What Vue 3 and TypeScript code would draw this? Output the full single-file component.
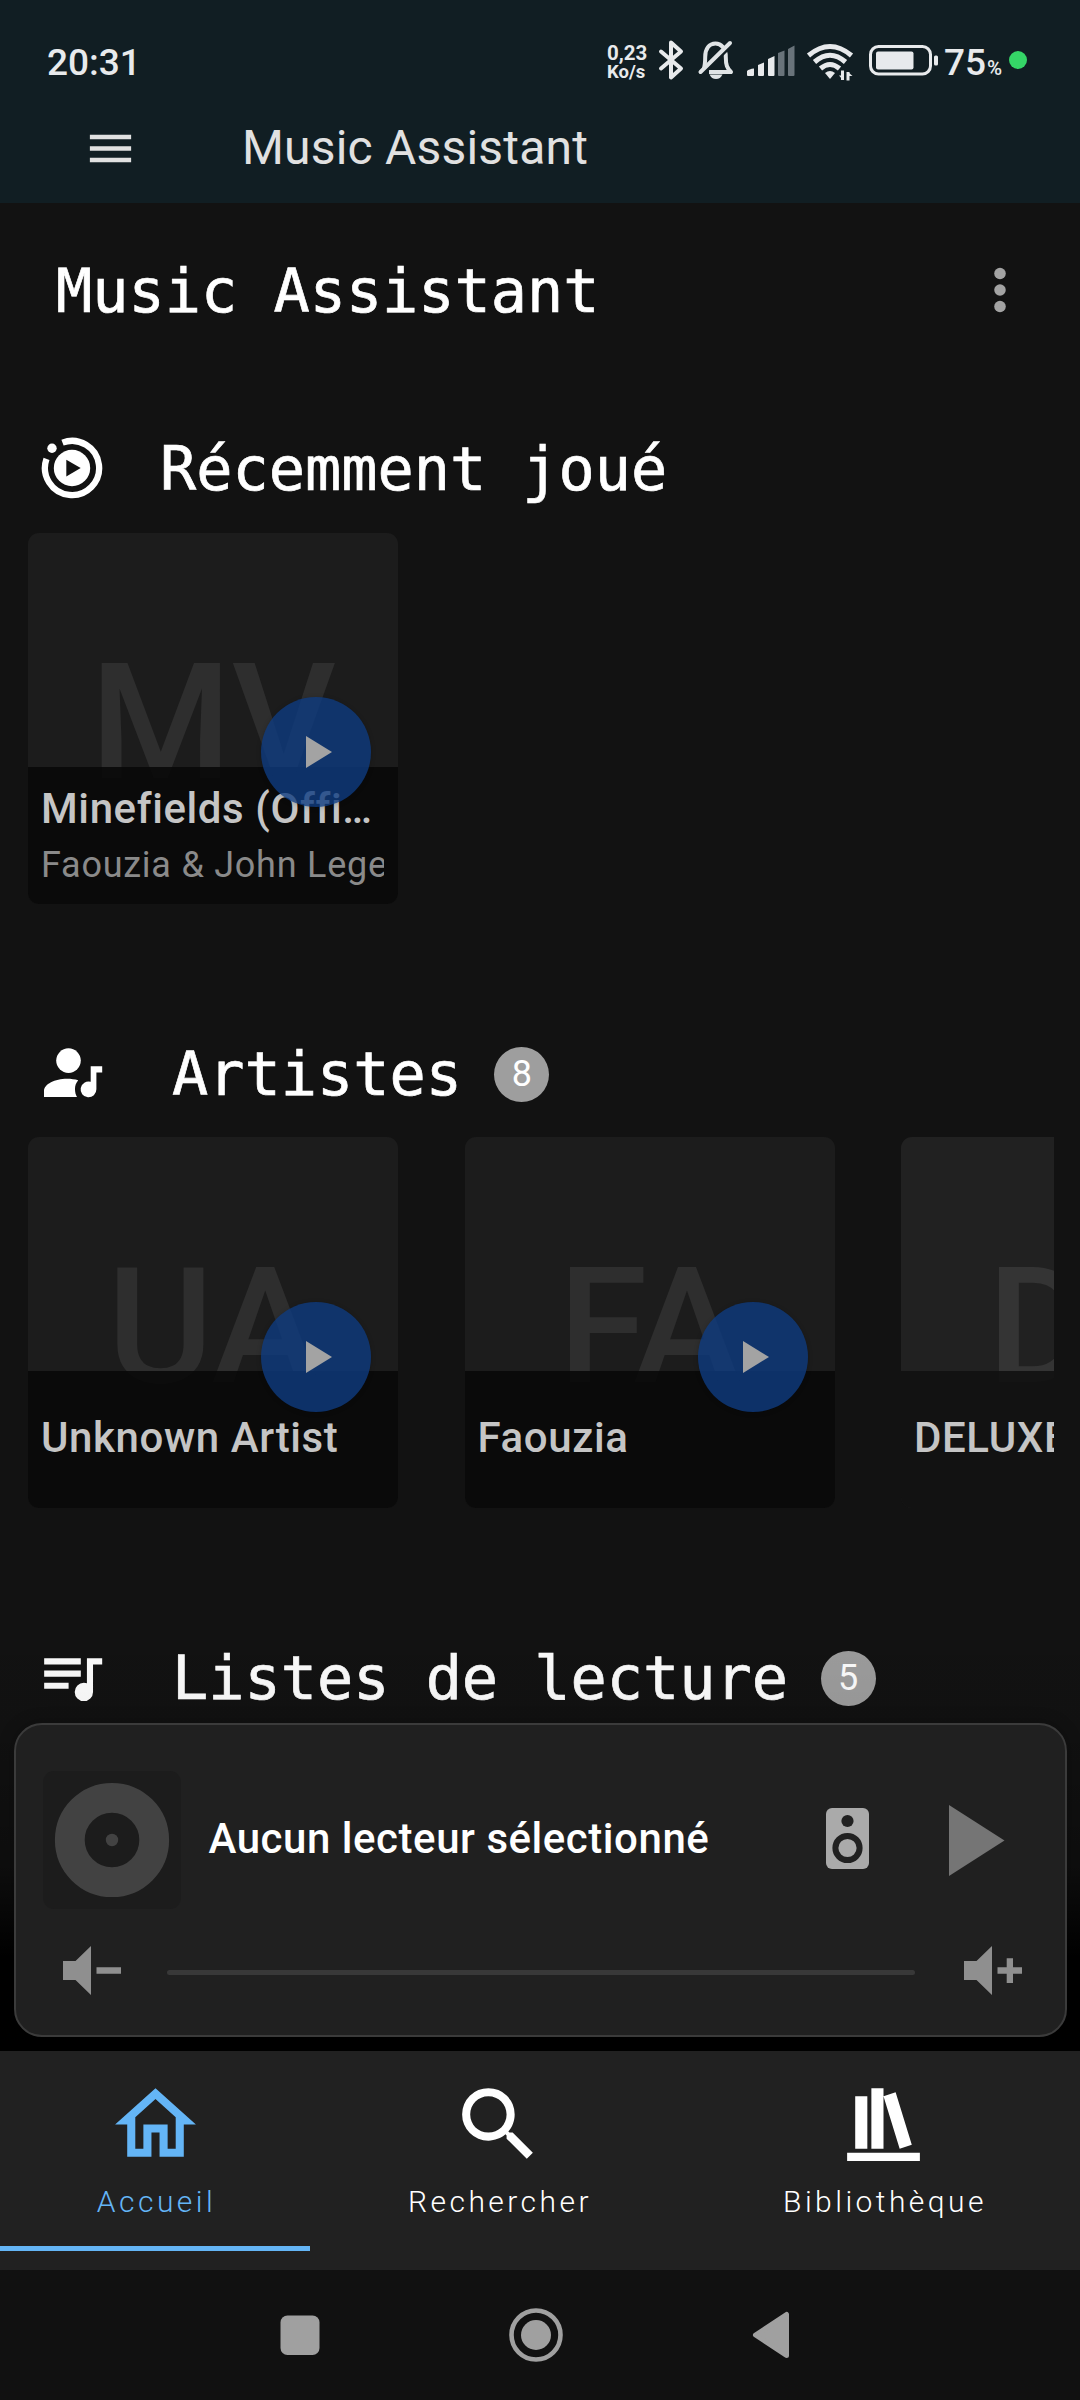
<script setup lang="ts">
interface Card {
  initials: string
  title: string
  subtitle?: string
  playable: boolean
}

interface Section {
  icon: 'recent' | 'artist' | 'playlist'
  title: string
  count?: number
  cards: Card[]
}

interface Tab {
  label: string
  path: string
  width: number
  active: boolean
}

const sections: Section[] = [
  {
    icon: 'recent',
    title: 'Récemment joué',
    cards: [{ initials: 'MV', title: 'Minefields (Official Video)', subtitle: 'Faouzia & John Legend', playable: true }],
  },
  {
    icon: 'artist',
    title: 'Artistes',
    count: 8,
    cards: [
      { initials: 'UA', title: 'Unknown Artist', playable: true },
      { initials: 'FA', title: 'Faouzia', playable: true },
      { initials: 'DE', title: 'DELUXE', playable: false },
    ],
  },
  { icon: 'playlist', title: 'Listes de lecture', count: 5, cards: [] },
]

const tabs: Tab[] = [
  {
    label: 'Accueil',
    width: 310,
    active: true,
    path: 'M12 5.69L17 10.19V18H15V12H9V18H7V10.19L12 5.69M12 3L2 12H5V20H11V14H13V20H19V12H22',
  },
  {
    label: 'Rechercher',
    width: 377,
    active: false,
    path: 'M9.5,3A6.5,6.5 0 0,1 16,9.5C16,11.11 15.41,12.59 14.44,13.73L14.71,14H15.5L20.5,19L19,20.5L14,15.5V14.71L13.73,14.44C12.59,15.41 11.11,16 9.5,16A6.5,6.5 0 0,1 3,9.5A6.5,6.5 0 0,1 9.5,3M9.5,5C7,5 5,7 5,9.5C5,12 7,14 9.5,14C12,14 14,12 14,9.5C14,7 12,5 9.5,5Z',
  },
  {
    label: 'Bibliothèque',
    width: 393,
    active: false,
    path: 'M9 3V18H12V3H9M12 5L16 18L19 17L15 4L12 5M5 5V18H8V5H5M3 19V21H21V19H3Z',
  },
]
</script>

<template>
  <div class="screen">
    <header class="top">
      <div class="status">
        <span class="clock">20:31</span>
        <div class="indicators">
          <div class="speed"><span class="rate">0,23</span><span class="unit">Ko/s</span></div>
          <svg class="bt" width="26" height="42" viewBox="0 0 26 42" fill="none" stroke="#e8eaec" stroke-width="4" stroke-linejoin="round" stroke-linecap="round">
            <path d="M3 12.5L23 29.5L13 38.5V3.5L23 12.5L3 29.5" />
          </svg>
          <svg class="bell" width="38" height="42" viewBox="0 0 38 42">
            <path d="M6.5 30.5C8 27 8.200 24 8.200 18C8.200 10 12 4.500 18.500 4.500C24 4.500 28.800 9 28.800 18C28.800 26 30 29 34 33H12" fill="none" stroke="#e0e4e6" stroke-width="4" stroke-linejoin="round" />
            <path d="M12.500 35.500H25.500C24 38.500 22 40 19 40C16 40 14 38.500 12.500 35.500Z" fill="#e0e4e6" />
            <path d="M5.500 35L35.500 4.500" stroke="#111e23" stroke-width="4" />
            <path d="M3.500 33L33 4" stroke="#e0e4e6" stroke-width="4" stroke-linecap="round" />
          </svg>
          <svg class="signal" width="50" height="32" viewBox="0 0 50 32">
            <path fill="#e8eaec" d="M1 26Q3 24 8 23.500V30Q8 31 7 31H2Q1 31 1 30ZM12 20L18 17.500V30Q18 31 17 31H13Q12 31 12 30ZM22 14L28.500 11V30Q28.500 31 27.500 31H23Q22 31 22 30Z" />
            <path fill="#69737a" d="M32 8L38.500 5.500V30Q38.500 31 37.500 31H33Q32 31 32 30ZM42 4L48.500 .500V30Q48.500 31 47.500 31H43Q42 31 42 30Z" />
          </svg>
          <svg class="wifi" width="50" height="38" viewBox="0 0 50 38" fill="none" stroke="#e8eaec" stroke-width="5">
            <path d="M2.500 12.500Q24 -5.500 45.500 12.500M8.500 19Q24 5.500 39.500 19M14.500 25.500Q24 17.500 33.500 25.500" />
            <path fill="#e8eaec" stroke="none" d="M19 30Q24 26 29 30L24 36Z" />
            <path stroke-width="3" d="M36.500 27.500V37M42 29V37.500" />
            <path fill="#e8eaec" stroke="none" d="M33 32.500H36.500V36.500ZM42 29L46.500 33H42Z" />
          </svg>
          <svg class="battery" width="70" height="31" viewBox="0 0 70 31">
            <rect x="1.500" y="1.500" width="60" height="27.500" rx="8" fill="none" stroke="#e8eaec" stroke-width="3" />
            <rect x="7" y="6.500" width="37.500" height="18" rx="2" fill="#e8eaec" />
            <rect x="65" y="10.500" width="4" height="10" rx="1.500" fill="#e8eaec" />
          </svg>
          <span class="level">75<small>%</small></span>
          <i class="mic"></i>
        </div>
      </div>
      <div class="appbar">
        <svg width="55" height="55" viewBox="0 0 24 24" fill="#e1e1e1"><path d="M3,6H21V8H3V6M3,11H21V13H3V11M3,16H21V18H3V16Z" /></svg>
        <span class="app-name">Music Assistant</span>
      </div>
    </header>

    <main class="content">
      <div class="page-head">
        <h1>Music Assistant</h1>
        <svg class="more" width="66" height="66" viewBox="0 0 24 24" fill="#a3a3a3">
          <circle cx="12" cy="6" r="2.100" /><circle cx="12" cy="12" r="2.100" /><circle cx="12" cy="18" r="2.100" />
        </svg>
      </div>

      <section v-for="s in sections" :key="s.icon" class="section" :class="s.icon">
        <div class="section-head">
          <svg v-if="s.icon === 'recent'" class="sec-icon" width="66" height="66" viewBox="-33 -33 66 66">
            <path d="M-9.500 -25.400A27.100 27.100 0 1 1 -25.500 -9.100" fill="none" stroke="#fff" stroke-width="6.300" />
            <circle cx="-20" cy="-19.700" r="4.700" fill="#fff" />
            <circle r="18.200" fill="#fff" />
            <path d="M-5.700 -8.200V8.400L8.700 0Z" fill="#121212" />
          </svg>
          <svg v-else-if="s.icon === 'artist'" class="sec-icon" width="73.300" height="73.300" viewBox="35 1036 73.300 73.300" fill="#fff">
            <circle cx="68.500" cy="1060.600" r="12.300" />
            <path d="M44 1097V1091C44 1084 55 1078.700 67 1078.700C71 1078.700 75 1079.200 78.200 1080.200C75.800 1083 75 1086 75 1089C75 1092 75.700 1095 77 1097Z" />
            <path d="M90.700 1066.300H102.200V1072.600H96.400V1089.300A7.900 7.900 0 1 1 90.700 1081.800Z" />
          </svg>
          <svg v-else class="sec-icon" width="73.300" height="73.300" viewBox="0 0 24 24" fill="#fff">
            <path d="M15,6H3V8H15V6M15,10H3V12H15V10M3,16H11V14H3V16M17,6V14.180C16.690,14.070 16.350,14 16,14A3,3 0 0,0 13,17A3,3 0 0,0 16,20A3,3 0 0,0 19,17V8H22V6H17Z" />
          </svg>
          <h2>{{ s.title }}</h2>
          <span v-if="s.count" class="badge">{{ s.count }}</span>
        </div>
        <div v-if="s.cards.length" class="cards">
          <article v-for="c in s.cards" :key="c.initials" class="card" :class="{ plain: !c.playable }">
            <div class="initials">{{ c.initials }}</div>
            <div class="caption" :class="{ single: !c.subtitle }">
              <div class="title">{{ c.title }}</div>
              <div v-if="c.subtitle" class="subtitle">{{ c.subtitle }}</div>
            </div>
            <div v-if="c.playable" class="play">
              <svg width="26" height="32" viewBox="0 0 26 32"><path d="M0 0V32L26 16Z" fill="#a3a3a3" /></svg>
            </div>
          </article>
        </div>
      </section>

      <div class="player-dock">
        <div class="player">
          <div class="now">
            <svg class="disc" width="138" height="138" viewBox="-69 -69 138 138">
              <rect x="-69" y="-69" width="138" height="138" rx="11" fill="#1c1c1c" />
              <circle r="42.200" fill="none" stroke="#424242" stroke-width="29.800" />
              <circle r="6.200" fill="#424242" />
            </svg>
            <span class="now-title">Aucun lecteur sélectionné</span>
            <svg class="speaker" width="43" height="61" viewBox="0 0 43 61">
              <rect width="43" height="61" rx="6" fill="#aaa" />
              <circle cx="21.500" cy="13" r="6.100" fill="#212121" />
              <circle cx="21.500" cy="40" r="12.100" fill="none" stroke="#212121" stroke-width="6" />
            </svg>
            <svg width="56" height="71" viewBox="0 0 56 71"><path d="M0 0V71L55.500 35.500Z" fill="#757575" /></svg>
          </div>
          <div class="volume">
            <svg width="58" height="49" viewBox="0 0 58 49" fill="#8f8f8f"><path d="M0 15H12.500L28 0V49L12.500 34H0ZM33.500 21.300H58V27.700H33.500Z" /></svg>
            <div class="track"></div>
            <svg width="58" height="49" viewBox="0 0 58 49" fill="#8f8f8f"><path d="M0 15H12.500L28 0V49L12.500 34H0ZM33.500 21.300H42.700V12.200H49V21.300H58V27.700H49V36.900H42.700V27.700H33.500Z" /></svg>
          </div>
        </div>
      </div>
    </main>

    <nav class="tabs">
      <div v-for="t in tabs" :key="t.label" class="tab" :class="{ active: t.active }" :style="{ width: t.width + 'px' }">
        <svg width="97" height="97" viewBox="0 0 24 24" fill="currentColor"><path :d="t.path" /></svg>
        <span>{{ t.label }}</span>
      </div>
    </nav>

    <footer class="system">
      <svg class="recents" width="40" height="40" viewBox="0 0 40 40"><rect x=".500" y=".500" width="39" height="39.500" rx="7" fill="#a0a0a0" /></svg>
      <svg class="home" width="54" height="54" viewBox="-27 -27 54 54"><circle r="24.500" fill="none" stroke="#a0a0a0" stroke-width="4.600" /><circle r="15" fill="#a0a0a0" /></svg>
      <svg class="back" width="38" height="48" viewBox="0 0 38 48"><path d="M3.500 24L34.500 3.500V44.500Z" fill="#a0a0a0" stroke="#a0a0a0" stroke-width="5" stroke-linejoin="round" /></svg>
    </footer>
  </div>
</template>

<style>
body {
  background: #121212;
}
</style>

<style scoped>
.screen {
  width: 1080px;
  height: 2400px;
  display: flex;
  flex-direction: column;
  overflow: hidden;
  background: #121212;
  color: #fff;
  font-family: Roboto, sans-serif;
}
svg {
  display: block;
  flex: none;
}
.top {
  height: 203px;
  background: #111e23;
}
.status {
  height: 121px;
  box-sizing: border-box;
  display: flex;
  justify-content: space-between;
  padding: 0 53px 0 47px;
  color: #e8eaec;
}
.clock {
  font-size: 37px;
  line-height: 125px;
  font-weight: 500;
}
.indicators {
  display: flex;
  align-items: flex-start;
}
.speed {
  width: 42px;
  margin: 43px 9px 0 0;
  display: flex;
  flex-direction: column;
  font-weight: 700;
}
.rate {
  font-size: 20.500px;
  line-height: 21px;
}
.unit {
  font-size: 18.500px;
  line-height: 17px;
}
.bt {
  margin: 39px 0 0;
}
.bell {
  margin: 38.500px 0 0 13px;
}
.signal {
  margin: 45px 0 0 11px;
}
.wifi {
  margin: 43px 0 0 10px;
}
.battery {
  margin: 45px 0 0 13px;
}
.level {
  display: flex;
  align-items: baseline;
  width: 65px;
  margin-left: 5px;
  font-size: 37px;
  font-weight: 500;
  line-height: 125px;
}
.level small {
  margin-left: 1px;
  font-size: 20.500px;
}
.mic {
  width: 18px;
  height: 18px;
  margin-top: 51px;
  border-radius: 50%;
  background: #35d567;
}
.appbar {
  display: flex;
  align-items: center;
  height: 55px;
  padding-left: 83px;
}
.app-name {
  margin: 0 0 2px 104px;
  font-size: 48px;
  line-height: 55px;
  letter-spacing: 0.200px;
  color: #e1e1e1;
}
.content {
  position: relative;
  height: 1848px;
  overflow: hidden;
}
.page-head {
  display: flex;
  align-items: center;
  justify-content: space-between;
  height: 176px;
  padding: 0 47px 0 56px;
}
.more {
  margin-bottom: 2px;
}
h1,
h2 {
  margin: 0;
  font-family: 'DejaVu Sans Mono', monospace;
  font-size: 60.200px;
  font-weight: 400;
  line-height: 80px;
  white-space: pre;
  -webkit-text-stroke: 0.700px #fff;
}
.section-head {
  display: flex;
  align-items: center;
  height: 125px;
  padding-left: 35px;
}
.section {
  padding-top: 108px;
}
.recent {
  padding-top: 25px;
}
.recent .section-head {
  height: 129px;
  padding-left: 39px;
}
.sec-icon {
  margin-bottom: 3.600px;
}
.recent .sec-icon {
  margin-bottom: 1px;
}
h2 {
  margin: 0 0 1px 63.700px;
}
.recent h2 {
  margin: 0 0 0 55px;
}
.badge {
  width: 55px;
  height: 55px;
  margin-left: 32.500px;
  border-radius: 50%;
  background: #9e9e9e;
  text-align: center;
  font-size: 36px;
  line-height: 55px;
}
.cards {
  display: flex;
  gap: 66.500px;
  width: 1026px;
  margin-left: 28px;
  overflow: hidden;
}
.card {
  position: relative;
  flex: none;
  width: 370px;
  height: 371px;
  border-radius: 11px;
  overflow: hidden;
  background: #1c1c1c;
}
.initials {
  padding-top: 120.500px;
  height: 116px;
  text-align: center;
  font-size: 162px;
  line-height: 139px;
  font-weight: 500;
  color: #2e2e2e;
}
.caption {
  position: absolute;
  left: 0;
  right: 0;
  bottom: 0;
  box-sizing: border-box;
  display: flex;
  flex-direction: column;
  justify-content: center;
  height: 137px;
  padding: 2px 14px 0 13px;
  background: rgba(7, 7, 7, 0.860);
}
.caption.single {
  padding: 0 14px 3px 13px;
}
.title {
  overflow: hidden;
  text-overflow: ellipsis;
  white-space: nowrap;
  font-size: 42px;
  font-weight: 500;
  line-height: 56px;
  letter-spacing: 0.600px;
  color: #c5c5c5;
}
.subtitle {
  overflow: hidden;
  white-space: nowrap;
  font-size: 36px;
  line-height: 56px;
  letter-spacing: 0.750px;
  color: #8a8a8a;
}
.play {
  position: absolute;
  left: 233px;
  top: 163.500px;
  width: 110px;
  height: 110px;
  display: flex;
  align-items: center;
  justify-content: center;
  padding-left: 6px;
  box-sizing: border-box;
  border-radius: 50%;
  background: rgba(14, 59, 127, 0.800);
  box-shadow: 0 1px 5px rgba(0, 0, 0, 0.200);
}
.artist .play {
  top: 165px;
}
.plain {
  background: #212121;
}
.plain .initials {
  color: #343434;
}
.plain .caption {
  background: rgba(16, 16, 16, 0.880);
}
.player-dock {
  position: absolute;
  left: 0;
  right: 0;
  bottom: 0;
  padding: 144px 13px 14px 14px;
  background: linear-gradient(to bottom, rgba(0, 0, 0, 0) 0, rgba(0, 0, 0, 0.050) 140px, rgba(0, 0, 0, 0.250) 290px, #000 385px);
}
.player {
  box-sizing: border-box;
  height: 314px;
  border: 2px solid #3b3b3b;
  border-radius: 28px;
  background: #202020;
  box-shadow: 0 0 16px rgba(0, 0, 0, 0.250);
}
.now {
  display: flex;
  align-items: center;
  height: 138px;
  padding: 46px 60px 0 27px;
}
.now-title {
  flex: 1;
  margin: 0 0 4px 27.500px;
  font-size: 42px;
  font-weight: 500;
  letter-spacing: 0.540px;
  white-space: nowrap;
}
.speaker {
  margin: -4px 80px 0 0;
}
.volume {
  display: flex;
  align-items: center;
  height: 49px;
  margin: 36.500px 43.500px 0 46.500px;
}
.track {
  flex: 1;
  height: 5px;
  margin: 4px 49px 0 46.500px;
  border-radius: 2.500px;
  background: #383838;
}
.tabs {
  display: flex;
  height: 219px;
  background: #212121;
}
.tab {
  box-sizing: border-box;
  position: relative;
  display: flex;
  flex-direction: column;
  align-items: center;
  padding-top: 25px;
}
.tab span {
  margin-top: 8.500px;
  padding-left: 3px;
  font-size: 30px;
  font-weight: 300;
  line-height: 40px;
  letter-spacing: 3.450px;
}
.active {
  color: #64b5f6;
}
.active::after {
  content: '';
  position: absolute;
  left: 0;
  right: 0;
  bottom: 19px;
  height: 5px;
  background: #64b5f6;
}
.system {
  display: flex;
  align-items: center;
  height: 130px;
  padding-left: 280px;
  background: #111;
}
.home {
  margin-left: 189px;
}
.back {
  margin-left: 189px;
}
</style>
